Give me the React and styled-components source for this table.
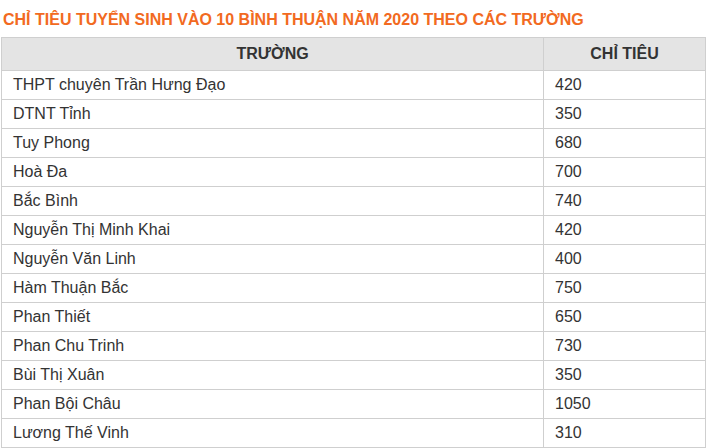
import styled, { createGlobalStyle } from "styled-components";

const GlobalStyle = createGlobalStyle`
  body {
    margin: 0;
    background: #fff;
    font-family: "Liberation Sans", Arial, sans-serif;
  }
`;

const schools = [
  { name: "THPT chuyên Trần Hưng Đạo", quota: 420 },
  { name: "DTNT Tỉnh", quota: 350 },
  { name: "Tuy Phong", quota: 680 },
  { name: "Hoà Đa", quota: 700 },
  { name: "Bắc Bình", quota: 740 },
  { name: "Nguyễn Thị Minh Khai", quota: 420 },
  { name: "Nguyễn Văn Linh", quota: 400 },
  { name: "Hàm Thuận Bắc", quota: 750 },
  { name: "Phan Thiết", quota: 650 },
  { name: "Phan Chu Trinh", quota: 730 },
  { name: "Bùi Thị Xuân", quota: 350 },
  { name: "Phan Bội Châu", quota: 1050 },
  { name: "Lương Thế Vinh", quota: 310 },
];

export default function App() {
  return (
    <Page>
      <GlobalStyle />
      <Title>CHỈ TIÊU TUYỂN SINH VÀO 10 BÌNH THUẬN NĂM 2020 THEO CÁC TRƯỜNG</Title>
      <Table>
        <colgroup>
          <col style={{ width: 542 }} />
          <col />
        </colgroup>
        <thead>
          <tr>
            <HeadCell>TRƯỜNG</HeadCell>
            <HeadCell>CHỈ TIÊU</HeadCell>
          </tr>
        </thead>
        <tbody>
          {schools.map((s) => (
            <tr key={s.name}>
              <Cell>{s.name}</Cell>
              <Cell>{s.quota}</Cell>
            </tr>
          ))}
        </tbody>
      </Table>
    </Page>
  );
}

const Page = styled.div`
  padding: 11px 0 0 1px;
`;

const Title = styled.h2`
  margin: 0 0 8px 2px;
  font-size: 16px;
  line-height: 18px;
  font-weight: bold;
  color: #f26a21;
`;

const Table = styled.table`
  width: 705px;
  border-collapse: collapse;
  table-layout: fixed;
  color: #333;
`;

const HeadCell = styled.th`
  height: 32px;
  padding: 0 10px;
  background: #e4e4e4;
  border: 1px solid #cfcfcf;
  font-size: 16px;
  font-weight: bold;
  text-align: center;
  color: #333;
`;

const Cell = styled.td`
  height: 28px;
  padding: 0 11px;
  border: 1px solid #cfcfcf;
  font-size: 16px;
  text-align: left;
`;
